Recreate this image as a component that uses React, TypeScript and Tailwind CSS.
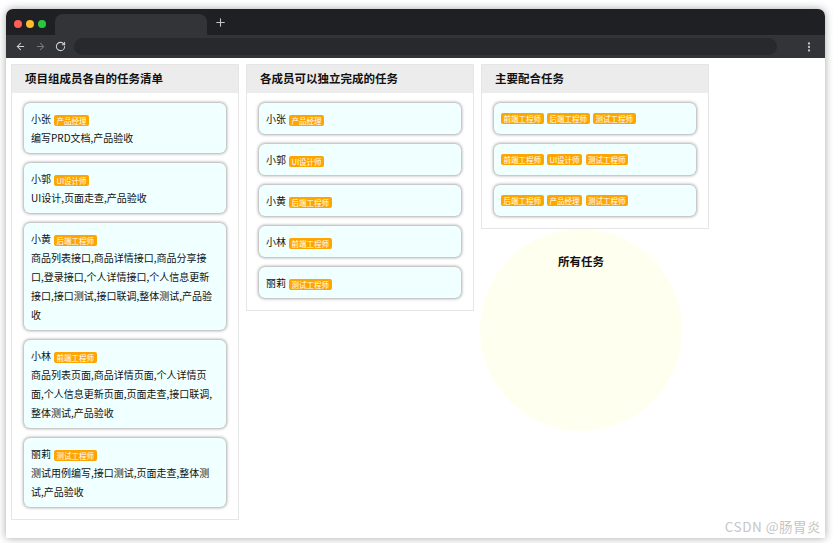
import React from "react";
import { ArrowLeft, ArrowRight, RotateCw, EllipsisVertical, Plus } from "lucide-react";

const FONT = { fontFamily: '"Noto Sans CJK SC", "Noto Sans", sans-serif' };

const members = [
  { name: "小张", role: "产品经理", tasks: "编写PRD文档,产品验收" },
  { name: "小郭", role: "UI设计师", tasks: "UI设计,页面走查,产品验收" },
  {
    name: "小黄",
    role: "后端工程师",
    tasks:
      "商品列表接口,商品详情接口,商品分享接口,登录接口,个人详情接口,个人信息更新接口,接口测试,接口联调,整体测试,产品验收",
  },
  {
    name: "小林",
    role: "前端工程师",
    tasks: "商品列表页面,商品详情页面,个人详情页面,个人信息更新页面,页面走查,接口联调,整体测试,产品验收",
  },
  { name: "丽莉", role: "测试工程师", tasks: "测试用例编写,接口测试,页面走查,整体测试,产品验收" },
];

const coop = [
  ["前端工程师", "后端工程师", "测试工程师"],
  ["前端工程师", "UI设计师", "测试工程师"],
  ["后端工程师", "产品经理", "测试工程师"],
];

function Badge({ children }: { children: React.ReactNode }) {
  return (
    <span className="inline-block align-middle bg-[#ffa500] text-white text-[7.5px] leading-[11px] px-[2.5px] rounded-[2px]">
      {children}
    </span>
  );
}

function Card({ children }: { children: React.ReactNode }) {
  return (
    <div className="bg-[#f0ffff] rounded-[6px] shadow-[0_0_3px_1px_rgba(0,0,0,0.33)] pl-[7px] pr-[13px] py-[6px] text-[10px] leading-[19px] text-[#111]">
      {children}
    </div>
  );
}

function Panel({ title, children }: { title: string; children: React.ReactNode }) {
  return (
    <div className="w-[228px] border border-[#e6e6e6] bg-white">
      <div className="h-[28px] bg-[#ececec] flex items-center pl-[13px] text-[11.5px] font-bold text-[#111]">
        {title}
      </div>
      <div className="flex flex-col gap-[10px] px-[12px] pt-[10px] pb-[12px]">{children}</div>
    </div>
  );
}

export default function App() {
  return (
    <div className="relative w-[834px] h-[543px] overflow-hidden bg-white" style={FONT}>
      <div className="pl-[6px] pt-[9px]">
        <div className="w-[819px] rounded-t-[7px] overflow-hidden shadow-[0_0_8px_rgba(0,0,0,0.35)]">
          {/* title bar */}
          <div className="h-[26px] bg-[#1f2023] flex items-end">
            <div className="flex gap-[4px] pl-[8px] self-start mt-[11px]">
              <span className="w-[8px] h-[8px] rounded-full bg-[#ff5f57]" />
              <span className="w-[8px] h-[8px] rounded-full bg-[#febc2e]" />
              <span className="w-[8px] h-[8px] rounded-full bg-[#28c840]" />
            </div>
            <div className="ml-[9px] w-[152px] h-[21px] bg-[#333438] rounded-t-[8px]" />
            <div className="self-center mt-[1px] ml-[7px] text-[#c4c7c5]">
              <Plus size={13} strokeWidth={2} />
            </div>
          </div>
          {/* toolbar */}
          <div className="h-[23px] bg-[#333438] flex items-center">
            <div className="pl-[9px] flex items-center gap-[9px]">
              <ArrowLeft size={11} strokeWidth={2.2} className="text-[#d0d3d6]" />
              <ArrowRight size={11} strokeWidth={2.2} className="text-[#76797d]" />
              <RotateCw size={11} strokeWidth={2.2} className="text-[#d0d3d6]" />
            </div>
            <div className="ml-[8px] w-[703px] h-[17px] rounded-full bg-[#27292c]" />
            <div className="ml-[26px] text-[#c4c7c5]">
              <EllipsisVertical size={12} strokeWidth={2.6} />
            </div>
          </div>
          {/* content */}
          <div className="h-[480px] bg-white flex gap-[7px] pl-[5px] pt-[6px]">
            <div className="self-start">
              <Panel title="项目组成员各自的任务清单">
                {members.map((m) => (
                  <Card key={m.name}>
                    <div>
                      {m.name}
                      <span className="ml-[3px]">
                        <Badge>{m.role}</Badge>
                      </span>
                    </div>
                    <div>{m.tasks}</div>
                  </Card>
                ))}
              </Panel>
            </div>
            <div className="self-start">
              <Panel title="各成员可以独立完成的任务">
                {members.map((m) => (
                  <Card key={m.name}>
                    <div>
                      {m.name}
                      <span className="ml-[3px]">
                        <Badge>{m.role}</Badge>
                      </span>
                    </div>
                  </Card>
                ))}
              </Panel>
            </div>
            <div className="self-start flex flex-col items-start">
              <Panel title="主要配合任务">
                {coop.map((row, i) => (
                  <Card key={i}>
                    <div className="flex items-center gap-[3.5px] h-[19px]">
                      {row.map((r, j) => (
                        <Badge key={j}>{r}</Badge>
                      ))}
                    </div>
                  </Card>
                ))}
              </Panel>
              <div className="w-[202px] h-[202px] rounded-full bg-[#fffff0] flex justify-center pt-[24px] text-[11.5px] font-bold text-[#111] leading-[16px] -ml-[1px]">
                所有任务
              </div>
            </div>
          </div>
        </div>
      </div>
      <div className="absolute right-[13px] bottom-[7px] text-[13.5px] text-[#c6c6c6] tracking-[0.5px]">
        CSDN @肠胃炎
      </div>
    </div>
  );
}
